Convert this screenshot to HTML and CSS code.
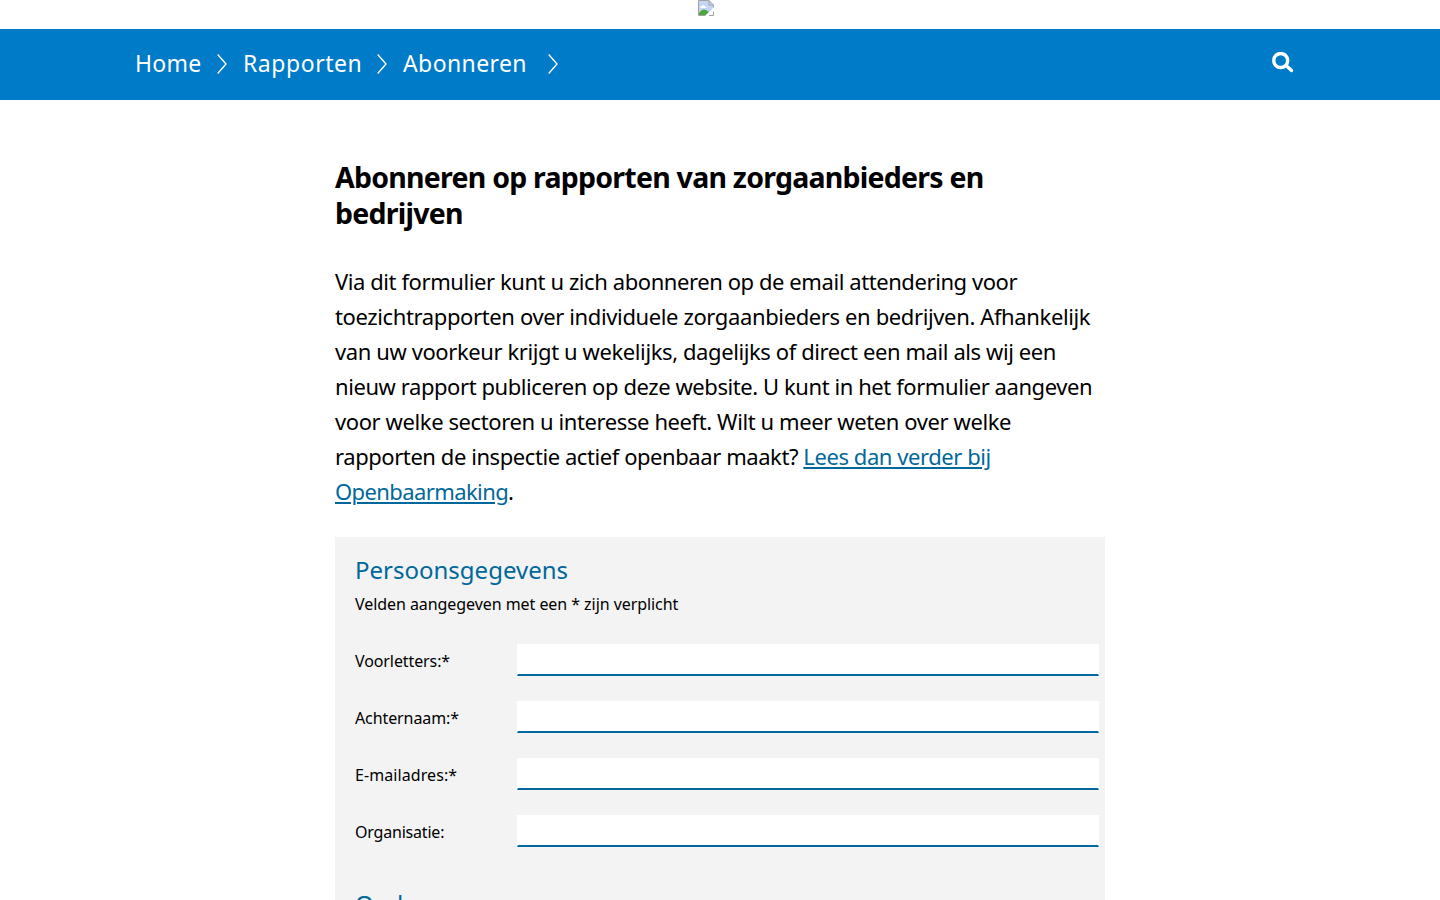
FILE: index.html
```html
<!DOCTYPE html>
<html lang="nl">
<head>
<meta charset="utf-8">
<title>Abonneren</title>
<link rel="stylesheet" href="styles.css">
</head>
<body>
<header class="logo">
<svg width="16" height="16" viewBox="0 0 16 16" aria-hidden="true"><path d="M.5.5H11L15.500 5V9L9 15.500H.5Z" fill="#c3d5f5"/><path d="M2 8q0-2 2-2q1-2 2.500 0q2 0 2 2Z" fill="#fff"/><path d="M1 15v-2q3-5 7-3l3 2-3 3Z" fill="#4fa83d"/><path d="M.5 15.500V.5H11L15.500 5v3M11 .5V5h4.500M.5 15.500H8M11 15.500h4.500V11" fill="none" stroke="#a2a2a2"/><path d="M16 7 7 16h3l6-5Z" fill="#fff"/></svg>
</header>
<nav class="bar">
<div class="crumbs">
<a class="home">Home</a><svg class="chev" viewBox="0 0 10 20"><path d="M.7.5 9 10 .7 19.500"/></svg>
<a class="reports">Rapporten</a><svg class="chev" viewBox="0 0 10 20"><path d="M.7.5 9 10 .7 19.500"/></svg>
<a class="subscribe">Abonneren</a><svg class="chev" viewBox="0 0 10 20"><path d="M.7.5 9 10 .7 19.500"/></svg>
</div>
<svg class="search" viewBox="0 0 22 21"><circle cx="8.700" cy="8.500" r="7" /><path d="m14 13.500 5.500 5" stroke-linecap="round"/></svg>
</nav>
<main class="content">
<h1><span class="h1a">Abonneren op rapporten van zorgaanbieders en</span><span class="h1b">bedrijven</span></h1>
<p class="intro">
<span class="l1">Via dit formulier kunt u zich abonneren op de email attendering voor</span>
<span class="l2">toezichtrapporten over individuele zorgaanbieders en bedrijven. Afhankelijk</span>
<span class="l3">van uw voorkeur krijgt u wekelijks, dagelijks of direct een mail als wij een</span>
<span class="l4">nieuw rapport publiceren op deze website. U kunt in het formulier aangeven</span>
<span class="l5">voor welke sectoren u interesse heeft. Wilt u meer weten over welke</span>
<span class="l6">rapporten de inspectie actief openbaar maakt? <a>Lees dan verder bij</a></span>
<span class="l7"><a>Openbaarmaking</a>.</span>
</p>
<form class="form">
<h2>Persoonsgegevens</h2>
<p class="note">Velden aangegeven met een * zijn verplicht</p>
<div class="row"><label for="v">Voorletters:*</label><input id="v"></div>
<div class="row"><label for="a">Achternaam:*</label><input id="a"></div>
<div class="row"><label for="e" class="email">E-mailadres:*</label><input id="e"></div>
<div class="row"><label for="o" class="org">Organisatie:</label><input id="o"></div>
<h2 class="next">Onderwerpen</h2>
</form>
</main>
</body>
</html>
```
FILE: styles.css
```css
* { box-sizing: border-box; }
body { margin: 0; height: 900px; overflow: hidden; background: #fff; color: #000; font-family: "Noto Sans", sans-serif; }
.logo { height: 29px; display: flex; justify-content: center; padding-right: 28px; }
.bar { height: 71px; background: #007bc7; color: #fff; display: flex; justify-content: space-between; padding: 0 146px 0 135px; }
.crumbs { display: flex; font-size: 23px; line-height: 69px; white-space: nowrap; }
.home { width: 82px; letter-spacing: .3px; }
.reports { width: 134px; margin-left: 16px; letter-spacing: .55px; }
.subscribe { width: 145px; margin-left: 16px; letter-spacing: .4px; }
.chev { width: 10px; height: 20px; margin-top: 25px; fill: none; stroke: #fff; stroke-width: 1.4; }
.search { width: 22px; height: 21px; margin-top: 23px; fill: none; stroke: #fff; stroke-width: 3.4; }
.content { width: 770px; margin: 59px auto 0; }
h1 { margin: 0; font-size: 28.5px; line-height: 36px; font-weight: 700; letter-spacing: -.76px; }
h1 span, .intro span { display: block; width: max-content; white-space: nowrap; }
.intro { margin: 33px 0 28px; font-size: 22px; line-height: 35px; }
.l1 { letter-spacing: -.42px; }
.l2 { letter-spacing: -.375px; }
.l3 { letter-spacing: -.4px; }
.l4 { letter-spacing: -.425px; }
.l5 { letter-spacing: -.4px; }
.l6 { letter-spacing: -.43px; }
.l7 { letter-spacing: -.6px; }
.intro a { color: #01689b; text-decoration: underline; text-decoration-thickness: 2px; text-underline-offset: 2px; }
.form { height: 363px; overflow: hidden; background: #f3f3f3; padding: 15px 6px 0 20px; }
h2 { margin: 0; font-size: 24px; line-height: 36px; font-weight: 400; color: #01689b; width: max-content; }
.note { margin: 4px 0 28px; font-size: 16px; line-height: 24px; width: max-content; letter-spacing: -.06px; }
.row { display: flex; height: 32px; margin-bottom: 25px; font-size: 16px; line-height: 34px; letter-spacing: -.1px; }
label { width: 162px; white-space: nowrap; }
.email { letter-spacing: .08px; }
.org { letter-spacing: -.2px; }
input { flex: 1; min-width: 0; height: 32px; border: 1px solid #fff; border-bottom: 2px solid #01689b; border-radius: 0; background: #fff; outline: 0; padding: 0 8px; }
.next { margin-top: 39px; }
```
